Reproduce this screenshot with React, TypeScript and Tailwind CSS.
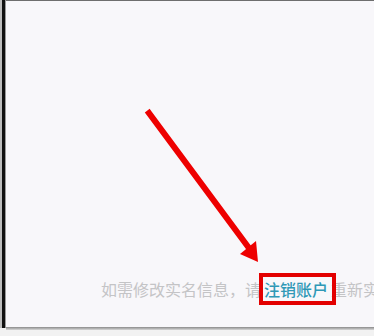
import React from 'react';

function Arrow() {
  return (
    <svg className="pointer-events-none absolute left-0 top-0" width="374" height="336" viewBox="0 0 374 336">
      <line x1="149" y1="113" x2="249" y2="248" stroke="#ee0000" strokeWidth="6" strokeLinecap="square" />
      <polygon points="258,262 240,254 256,241" fill="#ee0000" />
    </svg>
  );
}

export default function App() {
  return (
    <div className="relative flex h-[336px] w-[374px] overflow-hidden bg-[#f2f2f2] font-['Noto_Sans_CJK_SC','Noto_Sans',sans-serif]">
      {/* left frame edge */}
      <div className="flex h-[328px] shrink-0">
        <div className="w-[2px] bg-[#bdbdbd]" />
        <div className="w-[3px] bg-[#111111]" />
        <div className="w-[1px] bg-[#9a9a9a]" />
      </div>

      <div className="flex min-w-0 flex-1 flex-col">
        <div className="flex h-[327px] flex-col justify-end border-t border-[#6e6e6e] bg-[#f8f7fa] pb-[22px]">
          <p className="whitespace-nowrap pl-[95px] text-[16px] leading-[32px] text-[#c4c4c6]">
            如需修改实名信息，请
            <span className="relative mx-[3px] inline-block font-medium text-[#2f98b6]">
              注销账户
              <span className="absolute -left-[5px] -right-[8px] top-0 bottom-0 border-4 border-[#e30000]" />
            </span>
            重新实名
          </p>
        </div>
        <div className="h-[3px] bg-gradient-to-b from-[#8a8a8a] to-[#d8d8d8]" />
      </div>

      <Arrow />
    </div>
  );
}
